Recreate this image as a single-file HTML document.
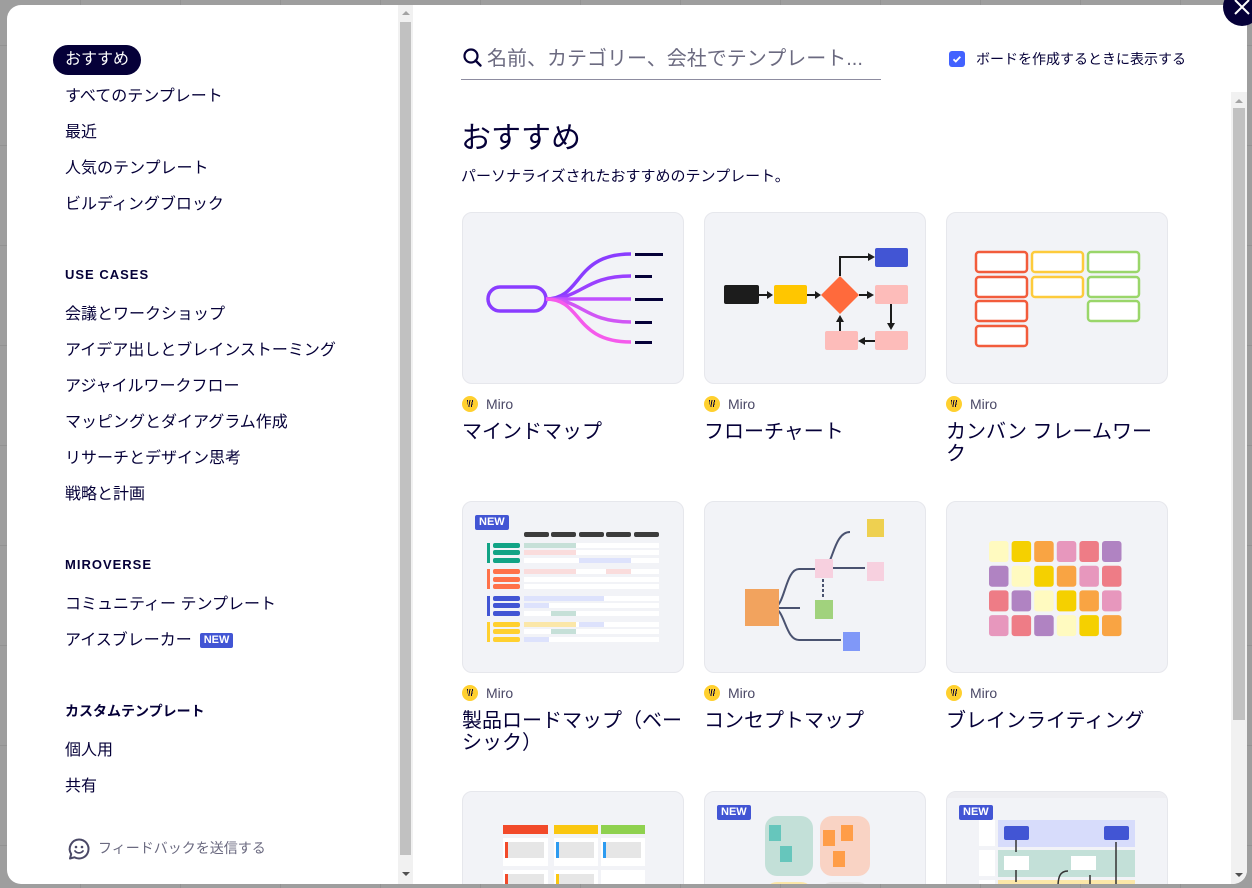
<!DOCTYPE html>
<html><head><meta charset="utf-8">
<style>
*{margin:0;padding:0;box-sizing:border-box}
html,body{width:1252px;height:888px;overflow:hidden}
body{background:#9e9e9e;font-family:"Liberation Sans","Noto Sans CJK JP",sans-serif;color:#050038;position:relative}
.grid{position:absolute;inset:0;background-image:linear-gradient(#939393 1px,transparent 1px),linear-gradient(90deg,#939393 1px,transparent 1px);background-size:100px 100px;background-position:-20px 45px}
.modal{position:absolute;left:7px;top:5px;width:1240px;height:879px;background:#fff;border-radius:14px;overflow:hidden}
.side{position:absolute;left:0;top:0;width:391px;height:879px}
.sbar{position:absolute;left:391px;top:0;width:15px;height:879px;background:#f1f1f1}
.sbar .th{position:absolute;left:2px;top:17px;width:11px;height:833px;background:#c1c1c1}
.arr{position:absolute;left:4px;width:0;height:0;border-left:4px solid transparent;border-right:4px solid transparent}
.it{position:absolute;left:58px;font-size:16px;line-height:20px;white-space:nowrap}
.hd{position:absolute;left:58px;font-size:13px;font-weight:bold;letter-spacing:1px}
.pill{position:absolute;left:46px;top:39px;width:88px;height:30px;border-radius:15px;background:#050038;color:#fff;font-size:16px;line-height:30px;padding-left:12px}
.badge{display:inline-block;color:#fff;font-size:11px;font-weight:bold;line-height:15px;padding:0 4px;border-radius:2px;vertical-align:2px;margin-left:8px;background:#4255d4}
.card{position:absolute;width:222px;height:172px;background:#f2f3f7;border:1px solid #e6e7ec;border-radius:10px;overflow:hidden}
.card svg{position:absolute;left:0;top:0}
.nb{position:absolute;left:12px;top:13px;background:#4255d4;color:#fff;font-size:11px;font-weight:bold;line-height:15px;padding:0 4px;border-radius:2px}
.miro{position:absolute;font-size:14px;color:#4a4866;line-height:16px}
.miro i{display:inline-block;width:16px;height:16px;border-radius:50%;background:#ffd02f;vertical-align:-3px;margin-right:8px;position:relative}
.miro i:after{content:"";position:absolute;left:5px;top:4px;width:6px;height:7px;background:repeating-linear-gradient(100deg,#050038 0 1px,transparent 1px 2.5px)}
.ttl{position:absolute;font-size:20px;line-height:22px;width:225px}
.mbar{position:absolute;left:1224px;top:87px;width:16px;height:792px;background:#f1f1f1}
.mbar .th{position:absolute;left:2px;top:16px;width:12px;height:612px;background:#c1c1c1}
</style></head><body>
<div class="grid"></div>
<div class="modal">
 <div class="side">
  <div class="pill" style="top:40px">おすすめ</div>
  <div class="it" style="top:82px">すべてのテンプレート</div>
  <div class="it" style="top:118px">最近</div>
  <div class="it" style="top:154px">人気のテンプレート</div>
  <div class="it" style="top:190px">ビルディングブロック</div>
  <div class="hd" style="top:262px">USE CASES</div>
  <div class="it" style="top:300px">会議とワークショップ</div>
  <div class="it" style="top:336px">アイデア出しとブレインストーミング</div>
  <div class="it" style="top:372px">アジャイルワークフロー</div>
  <div class="it" style="top:408px">マッピングとダイアグラム作成</div>
  <div class="it" style="top:444px">リサーチとデザイン思考</div>
  <div class="it" style="top:480px">戦略と計画</div>
  <div class="hd" style="top:552px">MIROVERSE</div>
  <div class="it" style="top:590px">コミュニティー テンプレート</div>
  <div class="it" style="top:626px">アイスブレーカー<span class="badge">NEW</span></div>
  <div class="hd" style="top:696px;font-size:14px;letter-spacing:0">カスタムテンプレート</div>
  <div class="it" style="top:736px">個人用</div>
  <div class="it" style="top:772px">共有</div>
  <svg style="position:absolute;left:60px;top:832px" width="24" height="24" viewBox="0 0 24 24"><path d="M12 2.5a9.5 9.5 0 1 1-4.6 17.8L3 21.5l1.2-4.4A9.5 9.5 0 0 1 12 2.5z" fill="none" stroke="#4a4866" stroke-width="2" stroke-linejoin="round"/><circle cx="9" cy="10" r="1.3" fill="#4a4866"/><circle cx="15" cy="10" r="1.3" fill="#4a4866"/><path d="M8 14c2 2.5 6 2.5 8 0" fill="none" stroke="#4a4866" stroke-width="1.8" stroke-linecap="round"/></svg>
  <div class="it" style="top:833px;left:91px;font-size:14px;color:#6b6a80">フィードバックを送信する</div>
 </div>
 <div class="sbar"><div class="arr" style="top:6px;border-bottom:4px solid #a3a3a3"></div><div class="th"></div><div class="arr" style="top:867px;border-top:4px solid #505050"></div></div>

 <svg style="position:absolute;left:455px;top:42px" width="22" height="22" viewBox="0 0 22 22"><circle cx="9" cy="9" r="6.5" fill="none" stroke="#050038" stroke-width="2.2"/><path d="M13.5 13.5l5 5" stroke="#050038" stroke-width="2.4" stroke-linecap="round"/></svg>
 <div style="position:absolute;left:480px;top:42px;font-size:20px;color:#6b6a80;line-height:24px">名前、カテゴリー、会社でテンプレート...</div>
 <div style="position:absolute;left:454px;top:74px;width:420px;height:1px;background:#8d8ca0"></div>
 <div style="position:absolute;left:942px;top:46px;width:16px;height:16px;border-radius:3px;background:#4262ff"><svg width="16" height="16"><path d="M4.5 8.3l2.3 2.2 4.5-4.7" fill="none" stroke="#fff" stroke-width="1.8"/></svg></div>
 <div style="position:absolute;left:969px;top:45px;font-size:14px;line-height:18px">ボードを作成するときに表示する</div>
 <div style="position:absolute;left:454px;top:115px;font-size:30px;line-height:38px">おすすめ</div>
 <div style="position:absolute;left:454px;top:162px;font-size:15px;line-height:20px">パーソナライズされたおすすめのテンプレート。</div>

 <!-- row1 -->
 <div class="card" style="left:455px;top:207px"><svg width="222" height="172">
  <rect x="25" y="74" width="58" height="24" rx="12" fill="none" stroke="#8a3cff" stroke-width="3.5"/>
  <g fill="none" stroke-width="3.5"><path d="M83 86C120 86 110 41 168 41" stroke="#8a3cff"/><path d="M83 86C120 86 120 63 168 63" stroke="#9a40ff"/><path d="M83 86H168" stroke="#c050ff"/><path d="M83 86C120 86 120 109 168 109" stroke="#d056f5"/><path d="M83 86C120 86 110 129 168 129" stroke="#f55aec"/></g>
  <g fill="#050038"><rect x="172" y="40" width="28" height="3"/><rect x="172" y="62" width="17" height="3"/><rect x="172" y="85" width="28" height="3"/><rect x="172" y="108" width="17" height="3"/><rect x="172" y="128" width="17" height="3"/></g>
 </svg></div>
 <div class="card" style="left:697px;top:207px"><svg width="222" height="172">
  <rect x="19" y="72" width="35" height="19" rx="2" fill="#1c1c1c"/>
  <rect x="69" y="72" width="33" height="19" rx="2" fill="#ffc600"/>
  <polygon points="135,63 154,82 135,101 116,82" fill="#ff6a3c"/>
  <rect x="170" y="35" width="33" height="19" rx="2" fill="#4255d4"/>
  <rect x="170" y="72" width="33" height="19" rx="2" fill="#fdbcba"/>
  <rect x="170" y="118" width="33" height="19" rx="2" fill="#fdbcba"/>
  <rect x="120" y="118" width="33" height="19" rx="2" fill="#fdbcba"/>
  <g stroke="#1c1c1c" stroke-width="2" fill="none"><path d="M54 82h8M102 82h8M154 82h8M135 63V44h28M186 91v20M170 128h-10M135 118v-10"/></g>
  <g fill="#1c1c1c"><path d="M62 78l6 4-6 4zM110 78l6 4-6 4zM162 78l7 4-7 4zM163 40l7 4-7 4zM182 110l4 7 4-7zM160 124l-7 4 7 4zM131 109l4-7 4 7z"/></g>
 </svg></div>
 <div class="card" style="left:939px;top:207px"><svg width="222" height="172" fill="#fff" stroke-width="2.5">
  <g stroke="#f25c3c"><rect x="29" y="39" width="51" height="20" rx="3"/><rect x="29" y="64" width="51" height="20" rx="3"/><rect x="29" y="88" width="51" height="20" rx="3"/><rect x="29" y="113" width="51" height="20" rx="3"/></g>
  <g stroke="#fdcb3c"><rect x="85" y="39" width="51" height="20" rx="3"/><rect x="85" y="64" width="51" height="20" rx="3"/></g>
  <g stroke="#9ad66a"><rect x="141" y="39" width="51" height="20" rx="3"/><rect x="141" y="64" width="51" height="20" rx="3"/><rect x="141" y="88" width="51" height="20" rx="3"/></g>
 </svg></div>
 <div class="miro" style="left:455px;top:391px"><i></i>Miro</div>
 <div class="miro" style="left:697px;top:391px"><i></i>Miro</div>
 <div class="miro" style="left:939px;top:391px"><i></i>Miro</div>
 <div class="ttl" style="left:455px;top:416px">マインドマップ</div>
 <div class="ttl" style="left:697px;top:416px">フローチャート</div>
 <div class="ttl" style="left:939px;top:416px">カンバン フレームワーク</div>

 <!-- row2 -->
 <div class="card" style="left:455px;top:496px"><svg width="222" height="172">
  <g fill="#3c3c3c"><rect x="61" y="30" width="25" height="5" rx="2"/><rect x="88" y="30" width="25" height="5" rx="2"/><rect x="116" y="30" width="25" height="5" rx="2"/><rect x="143" y="30" width="25" height="5" rx="2"/><rect x="171" y="30" width="25" height="5" rx="2"/></g>
  <g fill="#fff">
   <rect x="61" y="41" width="135" height="5"/><rect x="61" y="48" width="135" height="5"/><rect x="61" y="56" width="135" height="5"/>
   <rect x="61" y="67" width="135" height="5"/><rect x="61" y="75" width="135" height="5"/><rect x="61" y="82" width="135" height="5"/>
   <rect x="61" y="94" width="135" height="5"/><rect x="61" y="101" width="135" height="5"/><rect x="61" y="109" width="135" height="5"/>
   <rect x="61" y="120" width="135" height="5"/><rect x="61" y="127" width="135" height="5"/><rect x="61" y="135" width="135" height="5"/>
  </g>
  <g fill="#c6e0d8"><rect x="61" y="41" width="52" height="5"/><rect x="88" y="109" width="25" height="5"/><rect x="88" y="127" width="25" height="5"/></g>
  <g fill="#fadcdc"><rect x="61" y="48" width="52" height="5"/><rect x="61" y="67" width="52" height="5"/><rect x="143" y="67" width="25" height="5"/></g>
  <g fill="#dde2fc"><rect x="116" y="56" width="52" height="5"/><rect x="61" y="94" width="80" height="5"/><rect x="61" y="101" width="25" height="5"/><rect x="116" y="120" width="25" height="5"/><rect x="61" y="135" width="25" height="5"/></g>
  <rect x="61" y="120" width="52" height="5" fill="#fbe7a8"/>
  <g fill="#12a385"><rect x="24" y="41" width="3" height="20"/><rect x="30" y="41" width="27" height="5" rx="2"/><rect x="30" y="48" width="27" height="5" rx="2"/><rect x="30" y="56" width="27" height="5" rx="2"/></g>
  <g fill="#ff7149"><rect x="24" y="67" width="3" height="20"/><rect x="30" y="67" width="27" height="5" rx="2"/><rect x="30" y="75" width="27" height="5" rx="2"/><rect x="30" y="82" width="27" height="5" rx="2"/></g>
  <g fill="#4255d4"><rect x="24" y="94" width="3" height="20"/><rect x="30" y="94" width="27" height="5" rx="2"/><rect x="30" y="101" width="27" height="5" rx="2"/><rect x="30" y="109" width="27" height="5" rx="2"/></g>
  <g fill="#ffd02f"><rect x="24" y="120" width="3" height="20"/><rect x="30" y="120" width="27" height="5" rx="2"/><rect x="30" y="127" width="27" height="5" rx="2"/><rect x="30" y="135" width="27" height="5" rx="2"/></g>
 </svg><div class="nb">NEW</div></div>
 <div class="card" style="left:697px;top:496px"><svg width="222" height="172">
  <g fill="none" stroke="#4a5270" stroke-width="2"><path d="M67 106h28M68 106C80 106 80 67 94 67h16M68 106C80 106 80 138 94 138h42M118 66C128 66 128 30 145 30M118 66h42"/><path d="M118 77v18" stroke-dasharray="3 2"/></g>
  <rect x="40" y="87" width="34" height="37" fill="#f2a35e"/>
  <rect x="110" y="57" width="18" height="19" fill="#f7d0df"/>
  <rect x="110" y="98" width="18" height="19" fill="#a1d27d"/>
  <rect x="162" y="17" width="17" height="18" fill="#eed050"/>
  <rect x="162" y="60" width="17" height="19" fill="#f7d0df"/>
  <rect x="138" y="130" width="17" height="19" fill="#8098f8"/>
 </svg></div>
 <div class="card" style="left:939px;top:496px"><svg width="222" height="172" id="bw"></svg></div>
 <div class="miro" style="left:455px;top:680px"><i></i>Miro</div>
 <div class="miro" style="left:697px;top:680px"><i></i>Miro</div>
 <div class="miro" style="left:939px;top:680px"><i></i>Miro</div>
 <div class="ttl" style="left:455px;top:705px">製品ロードマップ（ベーシック）</div>
 <div class="ttl" style="left:697px;top:705px">コンセプトマップ</div>
 <div class="ttl" style="left:939px;top:705px">ブレインライティング</div>

 <!-- row3 -->
 <div class="card" style="left:455px;top:786px"><svg width="222" height="172">
  <rect x="40" y="33" width="45" height="9" fill="#f24a2a"/><rect x="91" y="33" width="44" height="9" fill="#fac710"/><rect x="138" y="33" width="44" height="9" fill="#8fd14f"/>
  <g fill="#fff"><rect x="40" y="46" width="45" height="28"/><rect x="91" y="46" width="44" height="28"/><rect x="138" y="46" width="44" height="28"/><rect x="40" y="78" width="45" height="28"/><rect x="91" y="78" width="44" height="28"/><rect x="138" y="78" width="44" height="28"/></g>
  <g fill="#e6e6e6"><rect x="45" y="50" width="36" height="16"/><rect x="96" y="50" width="35" height="16"/><rect x="143" y="50" width="35" height="16"/><rect x="45" y="82" width="36" height="16"/><rect x="96" y="82" width="35" height="16"/></g>
  <rect x="42" y="50" width="3" height="16" fill="#f24a2a"/><rect x="93" y="50" width="3" height="16" fill="#2d9bf0"/><rect x="140" y="50" width="3" height="16" fill="#2d9bf0"/><rect x="42" y="82" width="3" height="16" fill="#f24a2a"/><rect x="93" y="82" width="3" height="16" fill="#fac710"/>
 </svg></div>
 <div class="card" style="left:697px;top:786px"><svg width="222" height="172">
  <rect x="60" y="24" width="48" height="60" rx="12" fill="#c3e0d8"/><rect x="115" y="24" width="50" height="60" rx="12" fill="#f9d3c4"/>
  <rect x="64" y="33" width="12" height="16" fill="#66c6bc"/><rect x="75" y="54" width="12" height="16" fill="#66c6bc"/>
  <rect x="136" y="33" width="12" height="16" fill="#ff9d48"/><rect x="118" y="38" width="12" height="16" fill="#ff9d48"/><rect x="128" y="59" width="12" height="16" fill="#ff9d48"/>
  <rect x="60" y="90" width="48" height="40" rx="12" fill="#fbe7a8"/><rect x="115" y="90" width="50" height="40" rx="12" fill="#e6e6e6"/>
 </svg><div class="nb">NEW</div></div>
 <div class="card" style="left:939px;top:786px"><svg width="222" height="172">
  <rect x="0" y="0" width="222" height="6" fill="#eeeef2"/>
  <g fill="#fff"><rect x="32" y="28" width="16" height="26"/><rect x="32" y="58" width="16" height="26"/><rect x="32" y="88" width="16" height="26"/></g>
  <rect x="51" y="28" width="137" height="27" fill="#d7dcfb"/><rect x="51" y="58" width="137" height="27" fill="#c3e0d8"/><rect x="51" y="88" width="137" height="26" fill="#fbe7a8"/>
  <rect x="57" y="34" width="25" height="14" rx="2" fill="#4255d4"/><rect x="157" y="34" width="25" height="14" rx="2" fill="#4255d4"/>
  <rect x="57" y="64" width="25" height="14" fill="#fff"/><rect x="124" y="64" width="25" height="14" fill="#fff"/>
  <g stroke="#333" stroke-width="1.5" fill="none"><path d="M69 48v12M69 78v12M169 100V50M111 95c0-10 2-16 10-16h0M143 95v-12"/></g>
 </svg><div class="nb">NEW</div></div>

 <div class="mbar"><div class="arr" style="top:7px;border-bottom:4px solid #a3a3a3"></div><div class="th"></div><div class="arr" style="top:781px;border-top:4px solid #505050"></div></div>
</div>
<div style="position:absolute;left:1223px;top:-12px;width:38px;height:38px;border-radius:50%;background:#050038"></div>
<svg style="position:absolute;left:1233px;top:0" width="19" height="18"><path d="M2 0l14 14M16 0L2 14" stroke="#fff" stroke-width="2"/></svg>
<script>
var c=[["#fffac0","#f5d000","#f9a443","#e797bd","#ee7c86","#b083c2"],["#b083c2","#fffac0","#f5d000","#f9a443","#e797bd","#ee7c86"],["#ee7c86","#b083c2","#fffac0","#f5d000","#f9a443","#e797bd"],["#e797bd","#ee7c86","#b083c2","#fffac0","#f5d000","#f9a443"]];
var s="";for(var r=0;r<4;r++)for(var k=0;k<6;k++)s+='<rect x="'+(42+k*22.6)+'" y="'+(39+r*24.7)+'" width="19.5" height="21" rx="3" fill="'+c[r][k]+'"/>';
document.getElementById("bw").innerHTML=s;
</script>
</body></html>
